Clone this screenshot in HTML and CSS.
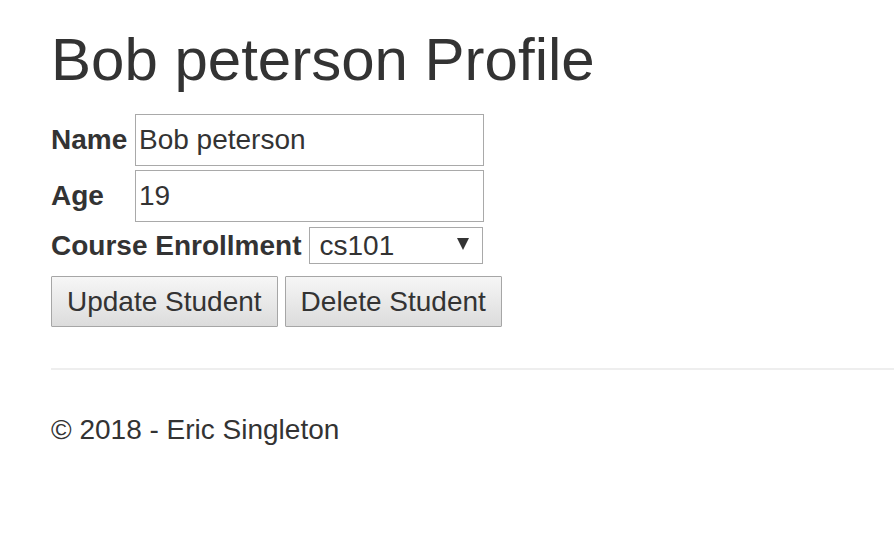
FILE: index.html
```html
<!DOCTYPE html>
<html>
<head>
<meta charset="utf-8">
<title>Bob peterson Profile</title>
<link rel="stylesheet" href="styles.css">
</head>
<body>
<div class="page">
  <h1 class="title">Bob peterson Profile</h1>
  <form class="profile">
    <div class="fields">
      <label class="label" for="name">Name</label>
      <input class="field" id="name" type="text" value="Bob peterson">
      <label class="label" for="age">Age</label>
      <input class="field" id="age" type="text" value="19">
    </div>
    <div class="course">
      <label class="label" for="course">Course Enrollment</label>
      <span class="select-wrap">
        <select class="select" id="course">
          <option>cs101</option>
        </select>
      </span>
    </div>
    <div class="actions">
      <button type="button" class="btn">Update Student</button>
      <button type="button" class="btn">Delete Student</button>
    </div>
  </form>
  <hr class="rule">
  <footer class="footer">© 2018 - Eric Singleton</footer>
</div>
</body>
</html>
```

FILE: styles.css
```css
html, body {
  margin: 0;
  padding: 0;
  background: #ffffff;
}

body {
  font-family: "Liberation Sans", Arial, sans-serif;
  font-size: 28px;
  color: #333333;
}

.page {
  padding-left: 51px;
}

.title {
  margin: 27px 0 0 0;
  font-size: 60px;
  font-weight: 400;
  line-height: 66px;
}

.profile {
  margin-top: 21px;
}

.fields {
  display: grid;
  grid-template-columns: 80px 349px;
  column-gap: 4px;
  row-gap: 4px;
  align-items: baseline;
}

.label {
  font-weight: 700;
  line-height: 32px;
}

.field {
  box-sizing: border-box;
  height: 52px;
  margin: 0;
  padding: 1px 3px;
  border: 1px solid #a9a9a9;
  font-family: "Liberation Sans", Arial, sans-serif;
  font-size: 28px;
  color: #333333;
  background: #ffffff;
  outline: none;
}

.course {
  display: flex;
  align-items: center;
  gap: 8px;
  margin-top: 5px;
}

.select-wrap {
  position: relative;
  display: inline-block;
}

.select-wrap::after {
  content: "";
  position: absolute;
  right: 14px;
  top: 11px;
  width: 0;
  height: 0;
  border-left: 6px solid transparent;
  border-right: 6px solid transparent;
  border-top: 12px solid #333333;
  pointer-events: none;
}

.select {
  -webkit-appearance: none;
  appearance: none;
  box-sizing: border-box;
  width: 174px;
  height: 37px;
  margin: 0;
  padding: 0 9px;
  border: 1px solid #a9a9a9;
  border-radius: 0;
  background: #ffffff;
  font-family: "Liberation Sans", Arial, sans-serif;
  font-size: 28px;
  color: #333333;
  line-height: 35px;
}

.actions {
  display: flex;
  gap: 7px;
  margin-top: 12px;
}

.btn {
  box-sizing: border-box;
  height: 51px;
  margin: 0;
  padding: 0 15px;
  border: 1px solid #a6a6a6;
  border-radius: 1px;
  background: linear-gradient(#f6f6f6, #dcdcdc);
  font-family: "Liberation Sans", Arial, sans-serif;
  font-size: 28px;
  color: #333333;
}

.rule {
  margin: 41px 0 0 0;
  border: 0;
  height: 2px;
  background: #eeeeee;
}

.footer {
  margin-top: 40px;
  line-height: 40px;
}
```
